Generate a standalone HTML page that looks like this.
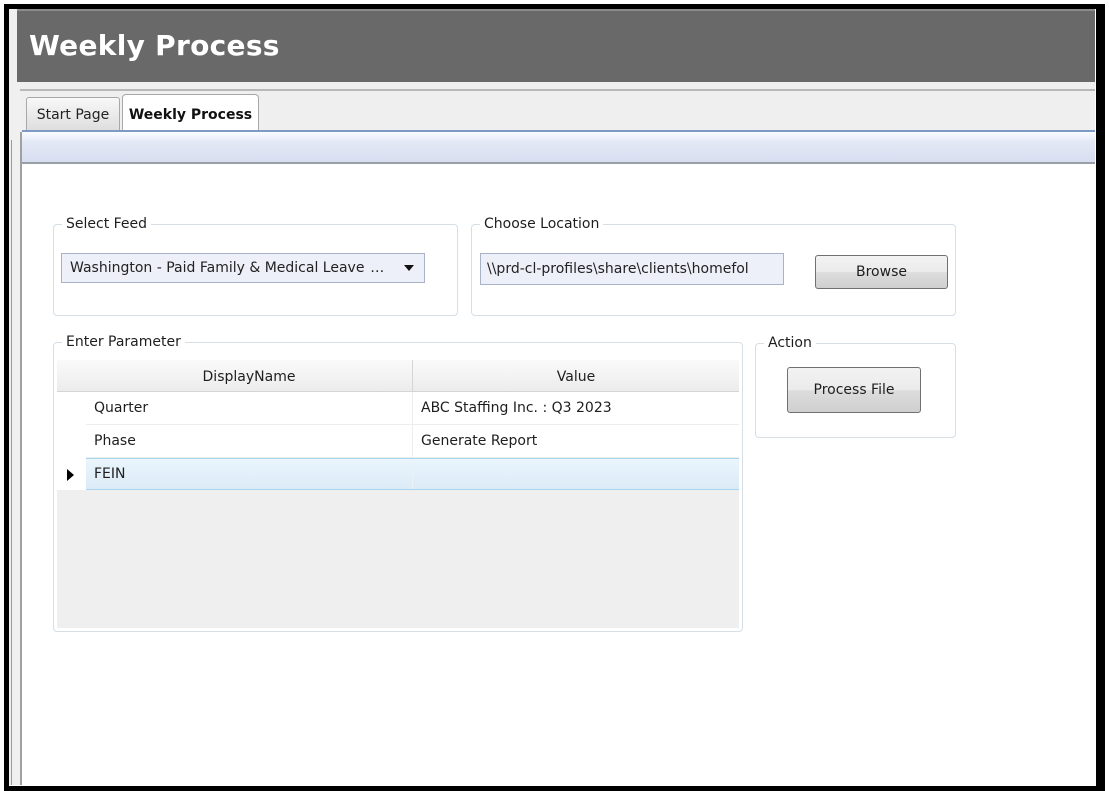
<!DOCTYPE html>
<html><head><style>
*{margin:0;padding:0;box-sizing:border-box}
body{width:1109px;height:791px;background:#fff;position:relative;overflow:hidden;font-family:"DejaVu Sans","Liberation Sans",sans-serif;font-size:14px;color:#1e1e1e}
.a{position:absolute}
.grp{position:absolute;border:1px solid #d5dfe5;border-radius:4px}
.lg{position:absolute;top:-10px;left:8px;background:#fff;padding:0 4px;font-size:14px;line-height:18px;color:#1e1e1e}
.btn{position:absolute;border:1px solid #707070;border-radius:3px;background:linear-gradient(#f2f2f2,#ebebeb 50%,#dddddd 51%,#cfcfcf);text-align:center;font-size:14px;color:#1e1e1e}
.cell{position:absolute;font-size:14px;line-height:32px}
</style></head><body>
<div class="a" style="left:4px;top:4px;width:1101px;height:787px;border:5px solid #000;border-right-width:9px;border-bottom-width:5px;background:#fff"></div>
<div class="a" style="left:9px;top:9px;width:12px;height:776px;background:#f0f0f0"></div>
<div class="a" style="left:11px;top:140px;width:1px;height:645px;background:#9a9a9a"></div>
<div class="a" style="left:20px;top:88px;width:2px;height:697px;background:#a0a0a0"></div>
<div class="a" style="left:17px;top:9px;width:1078px;height:73px;background:#696969;border-top:2px solid #8c8c8c"></div>
<div class="a" style="left:29px;top:26px;font-family:'DejaVu Sans',sans-serif;font-weight:bold;font-size:28px;color:#fff;line-height:40px;letter-spacing:0.3px">Weekly Process</div>
<div class="a" style="left:20px;top:82px;width:1075px;height:50px;background:#efefef"></div>
<div class="a" style="left:20px;top:89px;width:1075px;height:2px;background:#b8b8b8"></div>
<div class="a" style="left:26px;top:97px;width:94px;height:33px;border:1px solid #a8a8a8;border-bottom:none;border-radius:3px 3px 0 0;background:linear-gradient(#f8f8f8,#dedede);font-size:14px;line-height:34px;text-align:center;color:#222">Start Page</div>
<div class="a" style="left:122px;top:94px;width:137px;height:38px;border:1px solid #a8a8a8;border-bottom:none;border-radius:4px 4px 0 0;background:#fff;font-size:14px;font-weight:bold;line-height:40px;text-align:center;color:#111">Weekly Process</div>
<div class="a" style="left:22px;top:130px;width:1073px;height:2px;background:#7d9ac4"></div>
<div class="a" style="left:22px;top:132px;width:1073px;height:32px;background:linear-gradient(#fafcff,#e4e9f6 30%,#d6ddef)"></div>
<div class="a" style="left:22px;top:162px;width:1073px;height:2px;background:#9a9ea8"></div>
<div class="grp" style="left:53px;top:224px;width:405px;height:92px"><div class="lg">Select Feed</div></div>
<div class="a" style="left:61px;top:253px;width:364px;height:30px;border:1px solid #a9b3c6;background:#eef0f9;font-size:14px;line-height:28px;padding-left:8px;color:#222;white-space:nowrap;overflow:hidden">Washington - Paid Family &amp; Medical Leave &#8202;&#8230;</div>
<div class="a" style="left:404px;top:265px;width:0;height:0;border-left:5px solid transparent;border-right:5px solid transparent;border-top:6px solid #111"></div>
<div class="grp" style="left:471px;top:224px;width:485px;height:92px"><div class="lg">Choose Location</div></div>
<div class="a" style="left:480px;top:253px;width:304px;height:32px;border:1px solid #a9b3c6;background:#eef0f9;font-size:14px;line-height:30px;padding-left:6px;color:#222;white-space:nowrap;overflow:hidden">\\prd-cl-profiles\share\clients\homefol</div>
<div class="btn" style="left:815px;top:255px;width:133px;height:34px;line-height:32px">Browse</div>
<div class="grp" style="left:53px;top:342px;width:690px;height:290px"><div class="lg">Enter Parameter</div></div>
<div class="a" style="left:57px;top:360px;width:682px;height:268px;background:#efefef"></div>
<div class="a" style="left:57px;top:360px;width:682px;height:32px;background:linear-gradient(#fafafa,#ececec);border-bottom:1px solid #d5d5d5"></div>
<div class="a" style="left:412px;top:360px;width:1px;height:32px;background:#d5d5d5"></div>
<div class="cell" style="left:86px;top:361px;width:326px;text-align:center">DisplayName</div>
<div class="cell" style="left:413px;top:361px;width:326px;text-align:center">Value</div>
<div class="a" style="left:57px;top:392px;width:682px;height:66px;background:#fff"></div>
<div class="a" style="left:86px;top:424px;width:653px;height:1px;background:#ededed"></div>
<div class="a" style="left:86px;top:457px;width:653px;height:1px;background:#ededed"></div>
<div class="a" style="left:412px;top:392px;width:1px;height:66px;background:#ededed"></div>
<div class="cell" style="left:94px;top:392px">Quarter</div>
<div class="cell" style="left:421px;top:392px">ABC Staffing Inc. : Q3 2023</div>
<div class="cell" style="left:94px;top:425px">Phase</div>
<div class="cell" style="left:421px;top:425px">Generate Report</div>
<div class="a" style="left:57px;top:458px;width:29px;height:32px;background:#fff"></div>
<div class="a" style="left:86px;top:458px;width:653px;height:32px;background:linear-gradient(#eaf5fc,#dcebf7);border-top:1px solid #a8d6f0;border-bottom:1px solid #a8d6f0"></div>
<div class="a" style="left:412px;top:459px;width:1px;height:30px;background:#e8f2f8"></div>
<div class="cell" style="left:94px;top:458px">FEIN</div>
<div class="a" style="left:67px;top:469px;width:0;height:0;border-top:6px solid transparent;border-bottom:6px solid transparent;border-left:7px solid #000"></div>
<div class="grp" style="left:755px;top:343px;width:201px;height:95px"><div class="lg">Action</div></div>
<div class="btn" style="left:787px;top:367px;width:134px;height:46px;line-height:44px">Process File</div>
</body></html>
